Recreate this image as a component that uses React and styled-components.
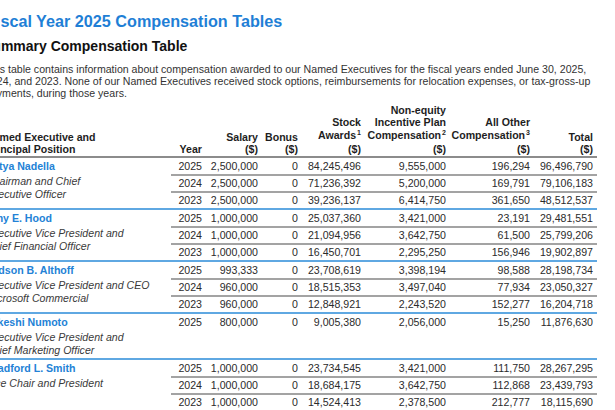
import styled, { createGlobalStyle } from 'styled-components';

const GlobalStyle = createGlobalStyle`
  body {
    margin: 0;
    background: #ffffff;
    font-family: "Liberation Sans", Arial, sans-serif;
    overflow: hidden;
  }
`;

const Page = styled.div`
  width: 611px;
  margin-left: -14px;
  padding-top: 11px;
  color: #333333;
`;

const Title = styled.h1`
  margin: 0;
  font-size: 16.2px;
  line-height: 20px;
  font-weight: bold;
  color: #1f7fd6;
  white-space: nowrap;
`;

const Heading = styled.h2`
  margin: 6px 0 0 -3px;
  font-size: 14px;
  line-height: 18px;
  font-weight: bold;
  color: #111111;
  white-space: nowrap;
`;

const Intro = styled.p`
  margin: 8px 0 0 -1px;
  font-size: 10.6px;
  line-height: 12px;
  color: #333333;
`;

const Table = styled.table`
  margin-top: 5px;
  width: 611px;
  table-layout: fixed;
  border-collapse: separate;
  border-spacing: 0;
  font-size: 10.6px;
  color: #2b2b2b;
`;

const Head = styled.th`
  padding: 0 ${p => (p.$left ? 0 : 4)}px 1px 0;
  text-align: ${p => (p.$left ? 'left' : 'right')};
  vertical-align: bottom;
  font-weight: bold;
  line-height: 12.3px;
  white-space: nowrap;
  color: #1e1e1e;
  border-bottom: 2px solid #8c8c8c;
`;

const Sup = styled.span`
  font-size: 7px;
  position: relative;
  top: -4px;
  margin-left: 1px;
`;

const NameCell = styled.td`
  padding: 0;
  height: 16px;
  line-height: 16px;
  font-weight: bold;
  color: #2382d6;
  white-space: nowrap;
  vertical-align: middle;
`;

const RoleCell = styled.td`
  padding: 1px 0 2px 0;
  vertical-align: top;
  font-style: italic;
  line-height: 12.5px;
  color: #3a3a3a;
  white-space: nowrap;
  border-bottom: 2px solid #5fa8e2;
`;

const Num = styled.td`
  padding: 0 4px 0 0;
  height: ${p => (p.$first ? 16 : 15)}px;
  line-height: 15px;
  text-align: right;
  white-space: nowrap;
  border-top: ${p => (p.$ruled ? '2px solid #a3a3a3' : 'none')};
  border-bottom: ${p => (p.$last ? '2px solid #5fa8e2' : 'none')};
`;

const widths = [185, 35, 56, 40, 63, 85, 84, 63];

const executives = [
  {
    name: 'Satya Nadella',
    role: ['Chairman and Chief', 'Executive Officer'],
    rows: [
      ['2025', '2,500,000', '0', '84,245,496', '9,555,000', '196,294', '96,496,790'],
      ['2024', '2,500,000', '0', '71,236,392', '5,200,000', '169,791', '79,106,183'],
      ['2023', '2,500,000', '0', '39,236,137', '6,414,750', '361,650', '48,512,537'],
    ],
  },
  {
    name: 'Amy E. Hood',
    role: ['Executive Vice President and', 'Chief Financial Officer'],
    rows: [
      ['2025', '1,000,000', '0', '25,037,360', '3,421,000', '23,191', '29,481,551'],
      ['2024', '1,000,000', '0', '21,094,956', '3,642,750', '61,500', '25,799,206'],
      ['2023', '1,000,000', '0', '16,450,701', '2,295,250', '156,946', '19,902,897'],
    ],
  },
  {
    name: 'Judson B. Althoff',
    role: ['Executive Vice President and CEO', 'Microsoft Commercial'],
    rows: [
      ['2025', '993,333', '0', '23,708,619', '3,398,194', '98,588', '28,198,734'],
      ['2024', '960,000', '0', '18,515,353', '3,497,040', '77,934', '23,050,327'],
      ['2023', '960,000', '0', '12,848,921', '2,243,520', '152,277', '16,204,718'],
    ],
  },
  {
    name: 'Takeshi Numoto',
    role: ['Executive Vice President and', 'Chief Marketing Officer'],
    rows: [
      ['2025', '800,000', '0', '9,005,380', '2,056,000', '15,250', '11,876,630'],
    ],
  },
  {
    name: 'Bradford L. Smith',
    role: ['Vice Chair and President'],
    rows: [
      ['2025', '1,000,000', '0', '23,734,545', '3,421,000', '111,750', '28,267,295'],
      ['2024', '1,000,000', '0', '18,684,175', '3,642,750', '112,868', '23,439,793'],
      ['2023', '1,000,000', '0', '14,524,413', '2,378,500', '212,777', '18,115,690'],
    ],
  },
];

const Role = ({ lines, span }) => (
  <RoleCell rowSpan={span}>
    {lines.map((l, i) => (
      <div key={i}>{l}</div>
    ))}
  </RoleCell>
);

const Group = ({ exec }) => {
  const { name, role, rows } = exec;
  const single = rows.length === 1;

  return (
    <>
      <tr>
        <NameCell>{name}</NameCell>
        {rows[0].map((v, i) => (
          <Num key={i} $first>{v}</Num>
        ))}
      </tr>
      {single ? (
        <tr>
          <Role lines={role} span={1} />
          {rows[0].map((_, i) => (
            <Num key={i} $last />
          ))}
        </tr>
      ) : (
        rows.slice(1).map((r, ri) => (
          <tr key={ri}>
            {ri === 0 && <Role lines={role} span={rows.length - 1} />}
            {r.map((v, i) => (
              <Num key={i} $ruled $last={ri === rows.length - 2}>{v}</Num>
            ))}
          </tr>
        ))
      )}
    </>
  );
};

const App = () => {
  return (
    <Page>
      <GlobalStyle />
      <Title>Fiscal Year 2025 Compensation Tables</Title>
      <Heading>Summary Compensation Table</Heading>
      <Intro>
        This table contains information about compensation awarded to our Named Executives for the fiscal years ended June 30, 2025,
        2024, and 2023. None of our Named Executives received stock options, reimbursements for relocation expenses, or tax-gross-up
        payments, during those years.
      </Intro>
      <Table>
        <colgroup>
          {widths.map((w, i) => (
            <col key={i} style={{ width: w }} />
          ))}
        </colgroup>
        <thead>
          <tr>
            <Head $left>Named Executive and<br />Principal Position</Head>
            <Head>Year</Head>
            <Head>Salary<br />($)</Head>
            <Head>Bonus<br />($)</Head>
            <Head>Stock<br />Awards<Sup>1</Sup><br />($)</Head>
            <Head>Non-equity<br />Incentive Plan<br />Compensation<Sup>2</Sup><br />($)</Head>
            <Head>All Other<br />Compensation<Sup>3</Sup><br />($)</Head>
            <Head>Total<br />($)</Head>
          </tr>
        </thead>
        <tbody>
          {executives.map(e => (
            <Group key={e.name} exec={e} />
          ))}
        </tbody>
      </Table>
    </Page>
  );
};

export default App;
